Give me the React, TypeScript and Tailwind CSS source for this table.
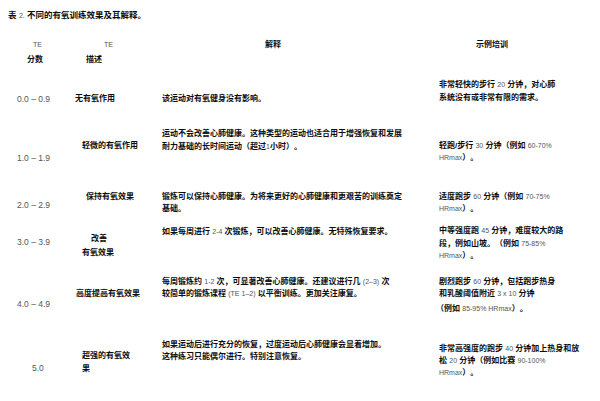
import React from 'react';

// Latin runs inside the CJK text are set lighter and smaller, like the source PDF
const L = ({ children }: { children: React.ReactNode }) => (
  <span className="font-normal text-[7px] text-[#555]">{children}</span>
);

interface Row {
  h: string;
  score: React.ReactNode;
  scoreCls: string;
  name: React.ReactNode;
  nameCls: string;
  desc: React.ReactNode;
  descCls: string;
  example: React.ReactNode;
  exampleCls: string;
}

const rows: Row[] = [
  {
    h: 'h-[50px]',
    score: '0.0 – 0.9',
    scoreCls: 'pt-[18px] pl-[17px]',
    name: '无有氧作用',
    nameCls: 'pt-[18px] pl-0',
    desc: '该运动对有氧健身没有影响。',
    descCls: 'pt-[18px]',
    example: (
      <>
        非常轻快的步行 <L>20</L> 分钟，对心肺
        <br />
        系统没有或非常有限的需求。
      </>
    ),
    exampleCls: 'pt-[3px] leading-[13px]',
  },
  {
    h: 'h-[60px]',
    score: '1.0 – 1.9',
    scoreCls: 'pt-[27px] pl-[17px]',
    name: '轻微的有氧作用',
    nameCls: 'pt-[15px] pl-[7px]',
    desc: (
      <>
        运动不会改善心肺健康。这种类型的运动也适合用于增强恢复和发展
        <br />
        耐力基础的长时间运动（超过<L>1</L>小时）。
      </>
    ),
    descCls: 'pt-[2px] leading-[13px]',
    example: (
      <>
        轻跑/步行 <L>30</L> 分钟（例如 <L>60-70%</L>
        <br />
        <L>HRmax</L>）。
      </>
    ),
    exampleCls: 'pt-[15px] leading-[12px]',
  },
  {
    h: 'h-[40px]',
    score: '2.0 – 2.9',
    scoreCls: 'pt-[14px] pl-[17px]',
    name: '保持有氧效果',
    nameCls: 'pt-[6px] pl-[11px]',
    desc: (
      <>
        锻炼可以保持心肺健康。为将来更好的心肺健康和更艰苦的训练奠定
        <br />
        基础。
      </>
    ),
    descCls: 'pt-[6px] leading-[11.5px]',
    example: (
      <>
        适度跑步 <L>60</L> 分钟（例如 <L>70-75%</L>
        <br />
        <L>HRmax</L>）。
      </>
    ),
    exampleCls: 'pt-[6px] leading-[12px]',
  },
  {
    h: 'h-[47px]',
    score: '3.0 – 3.9',
    scoreCls: 'pt-[11px] pl-[17px]',
    name: (
      <>
        <span className="pl-[9px]">改善</span>
        <br />
        有氧效果
      </>
    ),
    nameCls: 'pt-[7px] pl-[7px] leading-[14px]',
    desc: (
      <>
        如果每周进行 <L>2-4</L> 次锻炼，可以改善心肺健康。无特殊恢复要求。
      </>
    ),
    descCls: 'pt-[1px]',
    example: (
      <>
        中等强度跑 <L>45</L> 分钟，难度较大的路
        <br />
        段，例如山坡。（例如 <L>75-85%</L>
        <br />
        <L>HRmax</L>）。
      </>
    ),
    exampleCls: 'pt-0 leading-[12.5px]',
  },
  {
    h: 'h-[63px]',
    score: '4.0 – 4.9',
    scoreCls: 'pt-[26px] pl-[17px]',
    name: '高度提高有氧效果',
    nameCls: 'pt-[16px] pl-[1px]',
    desc: (
      <>
        每周锻炼约 <L>1-2</L> 次，可显著改善心肺健康。还建议进行几 <L>(2–3)</L> 次
        <br />
        较简单的锻炼课程 <L>(TE 1–2)</L> 以平衡训练。更加关注康复。
      </>
    ),
    descCls: 'pt-[4px] leading-[12px]',
    example: (
      <>
        剧烈跑步 <L>60</L> 分钟，包括跑步热身
        <br />
        和乳酸阈值附近 <L>3 x 10</L> 分钟
        <br />
        <span className="inline-block pt-[3px] -ml-[3px]">
          （例如 <L>85-95% HRmax</L>）。
        </span>
      </>
    ),
    exampleCls: 'pt-[4px] leading-[12px]',
  },
  {
    h: 'h-[66px]',
    score: '5.0',
    scoreCls: 'pt-[27px] pl-[32px]',
    name: (
      <>
        超强的有氧效
        <br />果
      </>
    ),
    nameCls: 'pt-[14px] pl-[7px] leading-[13px]',
    desc: (
      <>
        如果运动后进行充分的恢复，过度运动后心肺健康会显着增加。
        <br />
        这种练习只能偶尔进行。特别注意恢复。
      </>
    ),
    descCls: 'pt-[4px] leading-[12px]',
    example: (
      <>
        非常高强度的跑步 <L>40</L> 分钟加上热身和放
        <br />
        松 <L>20</L> 分钟（例如比赛 <L>90-100%</L>
        <br />
        <L>HRmax</L>）。
      </>
    ),
    exampleCls: 'pt-[8px] leading-[12px]',
  },
];

export default function App() {
  return (
    <div className="w-[600px] h-[401px] overflow-hidden bg-white text-[#0d0d0d] text-[8px] leading-[12.5px] whitespace-nowrap font-['Liberation_Sans','Noto_Sans_CJK_SC',sans-serif]">
      {/* Caption */}
      <div className="pt-[9px] pl-[8px] h-[38px] font-bold text-[8.5px]">
        表 <L>2.</L> 不同的有氧训练效果及其解释。
      </div>

      {/* Header */}
      <div className="flex h-[37px] font-bold">
        <div className="w-[75px] pt-[1px]">
          <div className="pl-[33px]"><L>TE</L></div>
          <div className="pl-[27px] pt-[2px]">分数</div>
        </div>
        <div className="w-[87px] pt-[1px]">
          <div className="pl-[29px]"><L>TE</L></div>
          <div className="pl-[11px] pt-[2px]">描述</div>
        </div>
        <div className="w-[277px] pt-[1px] pl-[103px]">解释</div>
        <div className="flex-1 pt-[1px] pl-[37px]">示例培训</div>
      </div>

      {/* Body */}
      {rows.map((r, i) => (
        <div key={i} className={`flex ${r.h}`}>
          <div className={`w-[75px] text-[8.5px] text-[#555] ${r.scoreCls}`}>{r.score}</div>
          <div className={`w-[87px] font-bold ${r.nameCls}`}>{r.name}</div>
          <div className={`w-[277px] font-bold ${r.descCls}`}>{r.desc}</div>
          <div className={`flex-1 font-bold ${r.exampleCls}`}>{r.example}</div>
        </div>
      ))}
    </div>
  );
}
